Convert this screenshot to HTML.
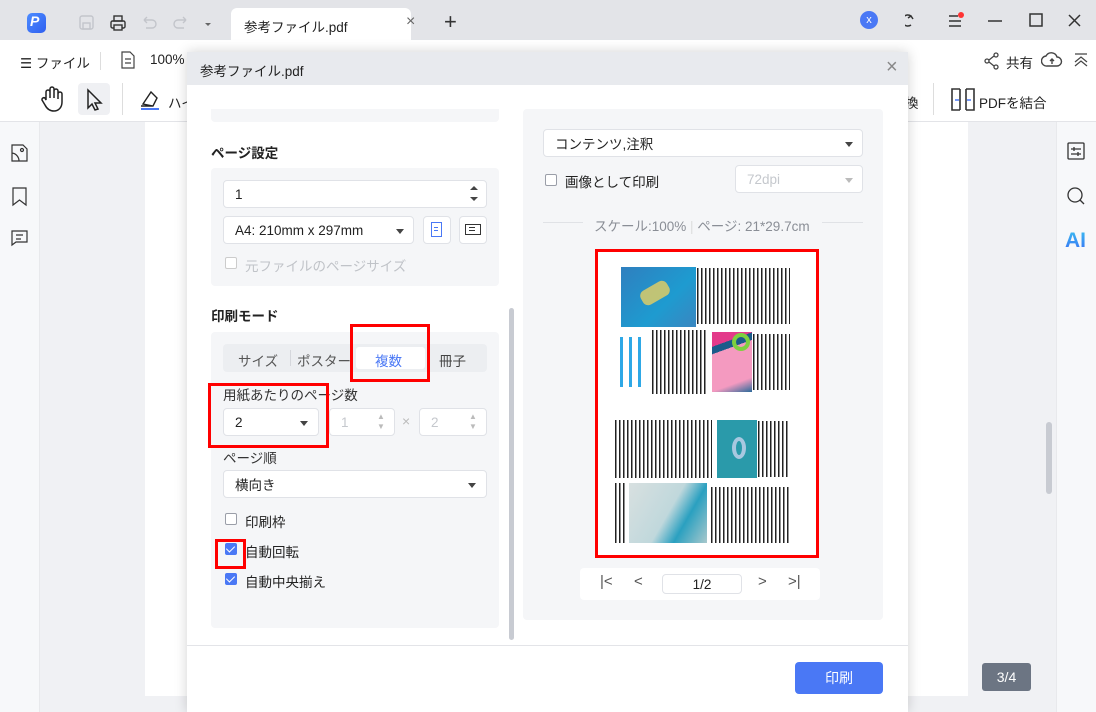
<!DOCTYPE html>
<html><head><meta charset="utf-8"><style>
*{box-sizing:border-box;margin:0;padding:0}
body{width:1096px;height:712px;position:relative;overflow:hidden;font-family:"Liberation Sans","Noto Sans CJK JP",sans-serif;font-size:13px;color:#222;background:#f0f1f4}
.a{position:absolute}
.txt{font-size:13.5px;color:#222;white-space:nowrap}
.inp{position:absolute;background:#fff;border:1px solid #e0e2e7;border-radius:4px;font-size:13.5px;color:#222;padding-left:11px;display:flex;align-items:center}
.caret{position:absolute;width:0;height:0;border-left:4px solid transparent;border-right:4px solid transparent;border-top:5px solid #444}
.cb{position:absolute;width:12px;height:12px;border:1px solid #9a9ea8;border-radius:2px;background:#fff}
.cbon{position:absolute;width:12px;height:12px;border-radius:2px;background:#4a78f5}
.cbon:after{content:"";position:absolute;left:3px;top:1px;width:4px;height:7px;border:solid #fff;border-width:0 1.6px 1.6px 0;transform:rotate(45deg)}
.red{position:absolute;border:3px solid #f00}
.col{position:absolute;background:repeating-linear-gradient(90deg,#222 0 1.3px,#fff 1.3px 4px)}
</style></head><body>
<div class="a" style="left:0;top:0;width:1096px;height:40px;background:#e3e4e8"></div>
<div class="a" style="left:27px;top:13px;width:19px;height:20px;border-radius:5px;background:linear-gradient(135deg,#4d8cff,#2f5ff0)"></div>
<div class="a" style="left:30px;top:13px;color:#fff;font-size:14px;font-weight:bold;font-style:italic">P</div>
<svg class="a" style="left:78px;top:14px" width="140" height="18" fill="none" stroke-width="1.4">
<rect x="2" y="2" width="13" height="13" rx="2" stroke="#c3c5cb"/><rect x="5" y="9" width="7" height="6" stroke="#c3c5cb"/>
<rect x="33" y="7" width="14" height="7" rx="1.5" stroke="#333"/><rect x="36" y="2" width="8" height="5" stroke="#333"/><rect x="36" y="11" width="8" height="5" stroke="#333" fill="#e3e4e8"/>
<path d="M66 6h8a4 4 0 010 8h-6M66 6l3-3M66 6l3 3" stroke="#c3c5cb"/>
<path d="M108 6h-8a4 4 0 000 8h6M108 6l-3-3M108 6l-3 3" stroke="#c3c5cb"/>
<path d="M127 9l3 3 3-3z" fill="#666" stroke="none"/></svg>
<div class="a" style="left:231px;top:8px;width:180px;height:32px;background:#fff;border-radius:6px 6px 0 0"></div>
<div class="a txt" style="left:244px;top:16px;font-size:13.5px">参考ファイル.pdf</div>
<div class="a" style="left:406px;top:13px;font-size:16px;color:#666">×</div>
<div class="a" style="left:444px;top:9px;font-size:22px;color:#333;font-weight:300">+</div>
<div class="a" style="left:860px;top:11px;width:18px;height:18px;border-radius:50%;background:#4a78f5;color:#fff;font-size:11px;text-align:center;line-height:18px">x</div>
<svg class="a" style="left:905px;top:10px" width="180" height="22" fill="none" stroke="#333" stroke-width="1.5">
<path d="M6 15a5.5 5.5 0 110-9M8 9l-2-3-3 2"/>
<path d="M44 6h9M44 11h12M44 16h12"/><circle cx="56" cy="5" r="3" fill="#f33" stroke="none"/>
<path d="M83 11h14"/><rect x="125" y="4" width="12" height="12"/><path d="M164 5l11 11M175 5l-11 11"/></svg>
<div class="a" style="left:0;top:40px;width:1096px;height:82px;background:#fff;border-bottom:1px solid #e3e4e8"></div>
<div class="a txt" style="left:20px;top:52px">☰ ファイル</div>
<div class="a" style="left:100px;top:52px;width:1px;height:18px;background:#ddd"></div>
<svg class="a" style="left:120px;top:51px" width="16" height="18" fill="none" stroke="#444" stroke-width="1.2"><path d="M2 1h8l4 4v12H2z M5 8h6M5 12h6"/></svg>
<div class="a txt" style="left:150px;top:52px">100%</div>
<svg class="a" style="left:38px;top:85px" width="30" height="30" fill="none" stroke="#222" stroke-width="1.5"><path d="M8 15V7a2 2 0 014 0v6V4a2 2 0 014 0v9V6a2 2 0 014 0v8-5a2 2 0 014 0v8c0 6-4 9-8 9s-7-2-9-6l-3-5a2 2 0 013-2z"/></svg>
<div class="a" style="left:78px;top:83px;width:32px;height:32px;border-radius:4px;background:#eff0f3"></div>
<svg class="a" style="left:85px;top:88px" width="20" height="24" fill="none" stroke="#222" stroke-width="1.5"><path d="M3 2l13 13h-6l3 6-3 1-3-6-4 4z"/></svg>
<div class="a" style="left:122px;top:83px;width:1px;height:32px;background:#ddd"></div>
<svg class="a" style="left:139px;top:88px" width="24" height="24" fill="none" stroke="#222" stroke-width="1.4"><path d="M4 16l8-12 6 6-4 8zM2 18h12"/><path d="M2 21h18" stroke="#4a78f5" stroke-width="2"/></svg>
<div class="a txt" style="left:168px;top:92px">ハイ</div>
<div class="a txt" style="left:905px;top:92px">換</div>
<div class="a" style="left:933px;top:83px;width:1px;height:32px;background:#ddd"></div>
<svg class="a" style="left:951px;top:88px" width="24" height="24" fill="none" stroke="#333" stroke-width="1.6"><path d="M9 1H1v21h8M15 1h8v21h-8M9 1v21M15 1v21"/><path d="M4 12h4M20 12h-4" stroke="#4a78f5"/></svg>
<div class="a txt" style="left:979px;top:92px">PDFを結合</div>
<svg class="a" style="left:983px;top:52px" width="18" height="18" fill="none" stroke="#444" stroke-width="1.3"><circle cx="13" cy="3" r="2"/><circle cx="4" cy="9" r="2"/><circle cx="13" cy="15" r="2"/><path d="M6 8l5-4M6 10l5 4"/></svg>
<div class="a txt" style="left:1006px;top:52px">共有</div>
<svg class="a" style="left:1041px;top:51px" width="22" height="18" fill="none" stroke="#444" stroke-width="1.4"><path d="M6 15a5 5 0 01-1-10 6 6 0 0111 1 4 4 0 010 9z"/><path d="M11 13V8M9 10l2-2 2 2"/></svg>
<svg class="a" style="left:1073px;top:52px" width="16" height="16" fill="none" stroke="#444" stroke-width="1.2"><path d="M2 2h12M2 10l6-5 6 5M2 14l6-5 6 5"/></svg>
<div class="a" style="left:0;top:122px;width:40px;height:590px;background:#f7f8fa;border-right:1px solid #e8e9ec"></div>
<svg class="a" style="left:10px;top:143px" width="20" height="120" fill="none" stroke="#333" stroke-width="1.2"><path d="M2 2h11l4 4v12H2zM2 10a8 8 0 017 8"/><circle cx="12" cy="7" r="1.5"/><path d="M3 45h13v17l-6.5-5L3 62z"/><path d="M2 88h15v11H6l-4 3zM6 92h7M6 96h5"/></svg>
<div class="a" style="left:145px;top:122px;width:823px;height:574px;background:#fff"></div>
<div class="a" style="left:1056px;top:122px;width:40px;height:590px;background:#f7f8fa;border-left:1px solid #e8e9ec"></div>
<svg class="a" style="left:1066px;top:142px" width="20" height="70" fill="none" stroke="#333" stroke-width="1.3"><rect x="2" y="1" width="16" height="16" rx="1"/><path d="M5 7h10M5 12h10M8 5v4M12 10v4"/><circle cx="9" cy="53" r="7"/><path d="M14 58l4 4"/></svg>
<div class="a" style="left:1065px;top:229px;font-size:21px;font-weight:bold;background:linear-gradient(180deg,#3ac0f0,#3a6cf5);-webkit-background-clip:text;color:transparent">AI</div>
<div class="a" style="left:1046px;top:422px;width:6px;height:72px;border-radius:3px;background:#c8cbd2"></div>
<div class="a" style="left:982px;top:663px;width:49px;height:28px;border-radius:3px;background:#6c7583;color:#fff;font-size:14px;text-align:center;line-height:28px">3/4</div>
<div class="a" style="left:187px;top:52px;width:721px;height:660px;background:#fff;box-shadow:0 0 12px rgba(0,0,0,.18)"></div>
<div class="a" style="left:187px;top:52px;width:721px;height:33px;background:#e8eaee"></div>
<div class="a txt" style="left:200px;top:60px">参考ファイル.pdf</div>
<div class="a" style="left:886px;top:56px;font-size:20px;color:#888;font-weight:300">×</div>
<div class="a" style="left:211px;top:109px;width:288px;height:13px;background:#f5f6f8;border-radius:0 0 4px 4px"></div>
<div class="a txt" style="left:211px;top:142px;font-weight:bold">ページ設定</div>
<div class="a" style="left:211px;top:168px;width:288px;height:118px;background:#f5f6f8;border-radius:4px"></div>
<div class="inp" style="left:223px;top:180px;width:264px;height:28px">1</div>
<div class="caret" style="left:470px;top:186px;border-top:none;border-bottom:4px solid #444"></div>
<div class="caret" style="left:470px;top:197px;border-top-width:4px"></div>
<div class="inp" style="left:223px;top:216px;width:191px;height:28px">A4: 210mm x 297mm</div>
<div class="caret" style="left:396px;top:229px"></div>
<div class="inp" style="left:423px;top:216px;width:28px;height:28px;padding:0"></div>
<div class="a" style="left:431px;top:222px;width:11px;height:15px;border:1.2px solid #4a78f5"><div style="margin:4px 2px;height:4px;border-top:1px solid #4a78f5;border-bottom:1px solid #4a78f5;width:4px"></div></div>
<div class="inp" style="left:459px;top:216px;width:28px;height:28px;padding:0"></div>
<div class="a" style="left:465px;top:224px;width:16px;height:11px;border:1.2px solid #333"><div style="margin:2px 3px;height:4px;border-top:1px solid #333;border-bottom:1px solid #333;width:6px"></div></div>
<div class="cb" style="left:225px;top:257px;border-color:#ccc"></div>
<div class="a txt" style="left:245px;top:255px;color:#c0c3c8">元ファイルのページサイズ</div>
<div class="a txt" style="left:211px;top:305px;font-weight:bold">印刷モード</div>
<div class="a" style="left:211px;top:332px;width:288px;height:296px;background:#f5f6f8;border-radius:4px"></div>
<div class="a" style="left:223px;top:344px;width:264px;height:28px;background:#eceef1;border-radius:4px"></div>
<div class="a" style="left:356px;top:347px;width:69px;height:22px;background:#fff;border-radius:3px"></div>
<div class="a txt" style="left:238px;top:350px;color:#555">サイズ</div>
<div class="a" style="left:290px;top:350px;width:1px;height:16px;background:#d5d7dc"></div>
<div class="a txt" style="left:297px;top:350px;color:#555">ポスター</div>
<div class="a txt" style="left:375px;top:350px;color:#4a78f5">複数</div>
<div class="a txt" style="left:439px;top:350px;color:#444">冊子</div>
<div class="red" style="left:350px;top:324px;width:80px;height:58px"></div>
<div class="a txt" style="left:223px;top:384px;color:#333">用紙あたりのページ数</div>
<div class="inp" style="left:223px;top:408px;width:96px;height:28px">2</div>
<div class="caret" style="left:300px;top:421px"></div>
<div class="inp" style="left:329px;top:408px;width:66px;height:28px;color:#c5c8cd">1</div>
<div class="a" style="left:377px;top:412px;font-size:8px;color:#bbb;line-height:10px">▲<br>▼</div>
<div class="a" style="left:402px;top:413px;color:#bbb;font-size:14px">×</div>
<div class="inp" style="left:419px;top:408px;width:68px;height:28px;color:#c5c8cd">2</div>
<div class="a" style="left:469px;top:412px;font-size:8px;color:#bbb;line-height:10px">▲<br>▼</div>
<div class="red" style="left:208px;top:383px;width:121px;height:65px"></div>
<div class="a txt" style="left:223px;top:447px;color:#333">ページ順</div>
<div class="inp" style="left:223px;top:470px;width:264px;height:28px">横向き</div>
<div class="caret" style="left:468px;top:483px"></div>
<div class="cb" style="left:225px;top:513px"></div>
<div class="a txt" style="left:245px;top:511px">印刷枠</div>
<div class="cbon" style="left:225px;top:543px"></div>
<div class="a txt" style="left:245px;top:541px">自動回転</div>
<div class="red" style="left:215px;top:539px;width:31px;height:30px"></div>
<div class="cbon" style="left:225px;top:573px"></div>
<div class="a txt" style="left:245px;top:571px">自動中央揃え</div>
<div class="a" style="left:509px;top:308px;width:5px;height:332px;border-radius:3px;background:#c8cbd2"></div>
<div class="a" style="left:523px;top:109px;width:360px;height:511px;background:#f5f6f8;border-radius:4px"></div>
<div class="inp" style="left:543px;top:129px;width:320px;height:28px">コンテンツ,注釈</div>
<div class="caret" style="left:845px;top:142px"></div>
<div class="cb" style="left:545px;top:174px"></div>
<div class="a txt" style="left:565px;top:171px">画像として印刷</div>
<div class="inp" style="left:735px;top:165px;width:128px;height:28px;color:#c5c8cd">72dpi</div>
<div class="caret" style="left:845px;top:178px;border-top-color:#bbb"></div>
<div class="a" style="left:543px;top:222px;width:40px;height:1px;background:#e0e2e6"></div>
<div class="a" style="left:822px;top:222px;width:41px;height:1px;background:#e0e2e6"></div>
<div class="a txt" style="left:594px;top:215px;color:#8a8e96">スケール:100% <span style="color:#ddd">|</span> ページ: 21*29.7cm</div>
<div class="a" style="left:598px;top:251px;width:218px;height:304px;background:#fff"></div>
<div class="a" style="left:621px;top:267px;width:75px;height:60px;background:linear-gradient(135deg,#2f7fbf,#1e9bd0 60%,#3a86c0)"></div>
<div class="a" style="left:640px;top:285px;width:30px;height:16px;background:#e8d060;transform:rotate(-30deg);border-radius:6px;opacity:.8"></div>
<div class="col" style="left:697px;top:268px;width:93px;height:56px"></div>
<div class="a" style="left:620px;top:337px;width:22px;height:50px;background:repeating-linear-gradient(90deg,#2ea8e6 0 3px,#fff 3px 9px)"></div>
<div class="col" style="left:652px;top:330px;width:56px;height:64px"></div>
<div class="a" style="left:712px;top:332px;width:40px;height:60px;background:linear-gradient(160deg,#e33a8a 0 20%,#1a5b8a 20% 30%,#f49ac0 30% 80%,#2a6a9a)"></div>
<div class="a" style="left:732px;top:333px;width:18px;height:18px;border-radius:50%;border:4px solid #7ed040"></div>
<div class="col" style="left:753px;top:334px;width:37px;height:56px"></div>
<div class="col" style="left:615px;top:420px;width:97px;height:58px"></div>
<div class="a" style="left:717px;top:420px;width:40px;height:58px;background:#2a9aaa"></div>
<div class="a" style="left:732px;top:437px;width:14px;height:22px;border-radius:50%;border:4px solid #a8c8e0"></div>
<div class="col" style="left:758px;top:421px;width:32px;height:56px"></div>
<div class="col" style="left:615px;top:483px;width:12px;height:60px"></div>
<div class="a" style="left:629px;top:483px;width:78px;height:60px;background:linear-gradient(120deg,#d8e0e0,#c0d8dc 50%,#2aa0c0 70%,#a8c8cc)"></div>
<div class="col" style="left:711px;top:487px;width:79px;height:56px"></div>
<div class="red" style="left:595px;top:249px;width:224px;height:309px"></div>
<div class="a" style="left:580px;top:568px;width:240px;height:32px;background:#fff;border-radius:4px"></div>
<div class="a" style="left:600px;top:573px;font-size:15px;color:#555">|&lt;</div>
<div class="a" style="left:634px;top:573px;font-size:15px;color:#555">&lt;</div>
<div class="inp" style="left:662px;top:574px;width:80px;height:20px;justify-content:center;padding:0">1/2</div>
<div class="a" style="left:758px;top:573px;font-size:15px;color:#555">&gt;</div>
<div class="a" style="left:788px;top:573px;font-size:15px;color:#555">&gt;|</div>
<div class="a" style="left:187px;top:645px;width:721px;height:1px;background:#e3e4e8"></div>
<div class="a" style="left:795px;top:662px;width:88px;height:32px;border-radius:4px;background:#4a78f5;color:#fff;font-size:14px;text-align:center;line-height:32px">印刷</div>
</body></html>
